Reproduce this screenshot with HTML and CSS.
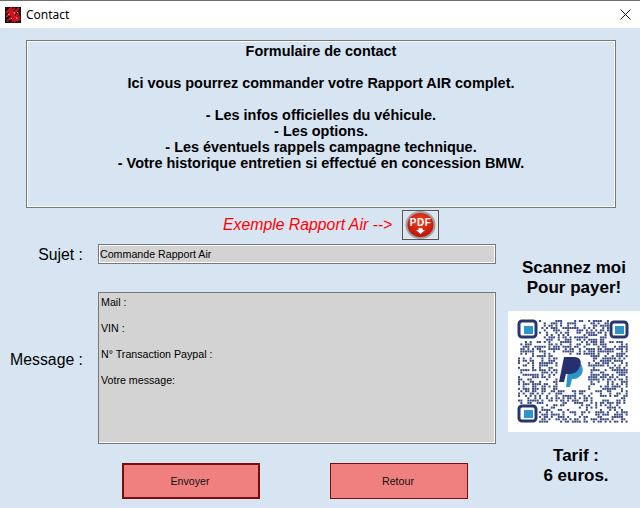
FILE: index.html
```html
<!DOCTYPE html>
<html lang="fr">
<head>
    <title>Contact</title>
    <meta charset="utf-8">
    <link rel="stylesheet" href="styles.css">
</head>

<body>
    <header class="titlebar">
        <svg class="app-icon" width="16" height="16" viewBox="0 0 16 16">
            <rect width="16" height="16" fill="#111"/>
            <path d="M1 6 L6 1 L5 5 L10 1 M1 10 L8 4 L6 9 L12 3 L14 1 M2 14 L9 8 L8 13 L14 6 M9 15 L15 9 M12 14 L15 12" stroke="#d8101c" stroke-width="2" fill="none"/>
            <path d="M3 7 L5 8 M9 5 L10 7 M6 12 L7 11 M11 10 L12 12 M12 5 L13 6" stroke="#f4a0a0" stroke-width="1" fill="none"/>
        </svg>
        <span class="window-title">Contact</span>
        <svg class="close-icon" width="11" height="11" viewBox="0 0 11 11">
            <path d="M0.5 0.5 L10.5 10.5 M10.5 0.5 L0.5 10.5" stroke="#111" stroke-width="1" fill="none"/>
        </svg>
    </header>

    <main class="window">
        <section class="intro">
            <p>Formulaire de contact</p>
            <p class="spaced">Ici vous pourrez commander votre Rapport AIR complet.</p>
            <p class="spaced">- Les infos officielles du véhicule.</p>
            <p>- Les options.</p>
            <p>- Les éventuels rappels campagne technique.</p>
            <p>- Votre historique entretien si effectué en concession BMW.</p>
        </section>

        <div class="lower">
            <div class="form">
                <div class="example">
                    <span class="example-text">Exemple Rapport Air --&gt;</span>
                    <button class="pdf-btn">
                        <svg width="31" height="28" viewBox="0 0 31 28">
                            <defs>
                                <radialGradient id="rouge" cx="50%" cy="35%" r="70%">
                                    <stop offset="0" stop-color="#f4401c"/>
                                    <stop offset="1" stop-color="#b80f08"/>
                                </radialGradient>
                            </defs>
                            <ellipse cx="15.5" cy="14" rx="15" ry="14" fill="#a0a0a0"/>
                            <ellipse cx="15.5" cy="14" rx="13" ry="12" fill="url(#rouge)"/>
                            <text x="15.5" y="15" class="pdf-label" text-anchor="middle">PDF</text>
                            <path d="M13.5 17 H17.5 V19 H20 L15.5 23 L11 19 H13.5 Z" fill="#fff"/>
                        </svg>
                    </button>
                </div>

                <div class="row row-sujet">
                    <label class="label">Sujet :</label>
                    <div class="field">Commande Rapport Air</div>
                </div>

                <div class="row row-message">
                    <label class="label label-message">Message :</label>
                    <div class="field field-area">
                        <p>Mail :</p>
                        <p>VIN :</p>
                        <p>N° Transaction Paypal :</p>
                        <p>Votre message:</p>
                    </div>
                </div>

                <div class="actions">
                    <button class="btn btn-default">Envoyer</button>
                    <button class="btn">Retour</button>
                </div>
            </div>

            <aside class="pay">
                <p class="pay-text">Scannez moi<br>Pour payer!</p>
                <div class="qr">
                    <svg id="qr" width="132" height="121" viewBox="0 0 132 121">
                        <g id="modules" fill="#3b4a82"></g>
                        <rect x="11" y="10" width="17" height="16" rx="3" fill="#fff" stroke="#27366f" stroke-width="3"/>
                        <rect x="16" y="15" width="9" height="8" fill="#2b95cc"/>
                        <rect x="103" y="11" width="16" height="15" rx="3" fill="#fff" stroke="#27366f" stroke-width="3"/>
                        <rect x="107" y="15" width="9" height="8" fill="#2b95cc"/>
                        <rect x="11" y="95" width="17" height="15" rx="3" fill="#fff" stroke="#27366f" stroke-width="3"/>
                        <rect x="16" y="99" width="9" height="8" fill="#2b95cc"/>
                        <path d="M58 76 L60 59 L73 53 C76 58 75 63 71 66 C69 68 66 68 64 68 L62 76 Z" fill="#2b95cc"/>
                        <path d="M51 71 L56 46 H66 C72 46 74 50 72 55 C70 61 66 63 61 63 H58 L56 71 Z" fill="#27306e"/>
                    </svg>
                </div>
                <p class="pay-text price">Tarif :<br>6 euros.</p>
            </aside>
        </div>
    </main>
    <script src="qr.js"></script>
</body>
</html>
```

FILE: styles.css
```css
* {
    box-sizing: border-box;
}

html, body {
    margin: 0;
    height: 100%;
}

body {
    font-family: "Liberation Sans", Arial, sans-serif;
    background: #d7e4f2;
    color: #000;
    overflow: hidden;
}

p {
    margin: 0;
}

.titlebar {
    display: flex;
    align-items: center;
    height: 28px;
    padding: 0 9px 0 5px;
    background: #fff;
    border-top: 1px solid #707070;
}

.window-title {
    margin-left: 5px;
    font-family: "Noto Sans", sans-serif;
    font-size: 12px;
}

.close-icon {
    margin-left: auto;
}

.window {
    padding: 12px 0 0 26px;
}

.intro {
    width: 590px;
    height: 168px;
    padding: 2px 0 0;
    border: 1px solid #777;
    box-shadow: inset 0 0 0 1px #fff;
    font-size: 14.45px;
    font-weight: bold;
    line-height: 16px;
    text-align: center;
}

.spaced {
    margin-top: 16px;
}

.lower {
    display: flex;
    margin-left: -26px;
}

.form {
    width: 496px;
}

.example {
    display: flex;
    align-items: center;
    height: 30px;
    margin-top: 2px;
    padding-left: 223px;
}

.example-text {
    width: 179px;
    color: #f00;
    font-size: 15.8px;
    font-style: italic;
}

.pdf-btn {
    display: flex;
    align-items: center;
    justify-content: center;
    width: 37px;
    height: 30px;
    padding: 0;
    background: #d7e4f2;
    border: 1px solid #555;
    box-shadow: inset 0 0 0 1px #e8e8e8;
}

.pdf-label {
    fill: #fff;
    font-family: "Liberation Sans", Arial, sans-serif;
    font-size: 10px;
    font-weight: bold;
    letter-spacing: .5px;
}

.row {
    display: grid;
    grid-template-columns: 83px 398px;
    column-gap: 15px;
}

.row-sujet {
    margin-top: 4px;
    align-items: center;
}

.row-sujet .label {
    padding-top: 1px;
}

.row-message {
    margin-top: 28px;
}

.label {
    font-size: 15.8px;
    text-align: right;
}

.label-message {
    padding-top: 59px;
}

.field {
    height: 20px;
    padding: 0 1px;
    background: #d3d3d3;
    border: 1px solid #777;
    box-shadow: inset 0 0 0 1px #fff;
    font-size: 10.67px;
    line-height: 18px;
}

.row .field-area {
    height: 152px;
    padding: 3px 2px;
    box-shadow: inset 0 -1px 0 #fff, inset -1px 0 0 #fff;
    line-height: 13px;
}

.field-area p {
    margin-bottom: 13px;
}

.actions {
    display: flex;
    gap: 70px;
    margin-top: 19px;
    padding-left: 122px;
}

.btn {
    width: 138px;
    height: 36px;
    padding: 0 2px 0 0;
    background: #f08080;
    border: 1px solid #7a0c0c;
    font-family: "Liberation Sans", Arial, sans-serif;
    font-size: 10.67px;
    color: #111;
}

.btn-default {
    border-width: 2px;
}

.pay {
    width: 132px;
    margin-left: 12px;
    padding-top: 50px;
    text-align: center;
}

.pay-text {
    font-size: 17px;
    font-weight: bold;
    line-height: 20px;
}

.qr {
    height: 121px;
    margin-top: 13px;
    background: #fff;
}

.qr svg {
    display: block;
}

.price {
    margin-top: 14px;
    padding-left: 4px;
}
```

FILE: qr.js
```js
// remplit le QR avec des modules pseudo-aleatoires
var groupe = document.getElementById("modules"),
    svgNs = "http://www.w3.org/2000/svg",
    pas = 2.34,
    graine = 4711;

function hasard() {
    graine = (graine * 16807) % 2147483647;
    return graine / 2147483647;
}

for (var l = 0; l < 44; l++) {
    for (var c = 0; c < 47; c++) {
        var x = 10 + c * pas,
            y = 9 + l * pas;

        // pas de modules sous les reperes ni sous le logo
        var coinHaut = y < 29 && (x < 31 || x > 99),
            coinBas = y > 92 && x < 31,
            logo = x > 48 && x < 78 && y > 43 && y < 78;

        if (coinHaut || coinBas || logo) {
            continue;
        }

        if (hasard() < 0.48) {
            var r = document.createElementNS(svgNs, "rect");
            r.setAttribute("x", x.toFixed(2));
            r.setAttribute("y", y.toFixed(2));
            r.setAttribute("width", 2);
            r.setAttribute("height", 2);
            groupe.appendChild(r);
        }
    }
}
```
